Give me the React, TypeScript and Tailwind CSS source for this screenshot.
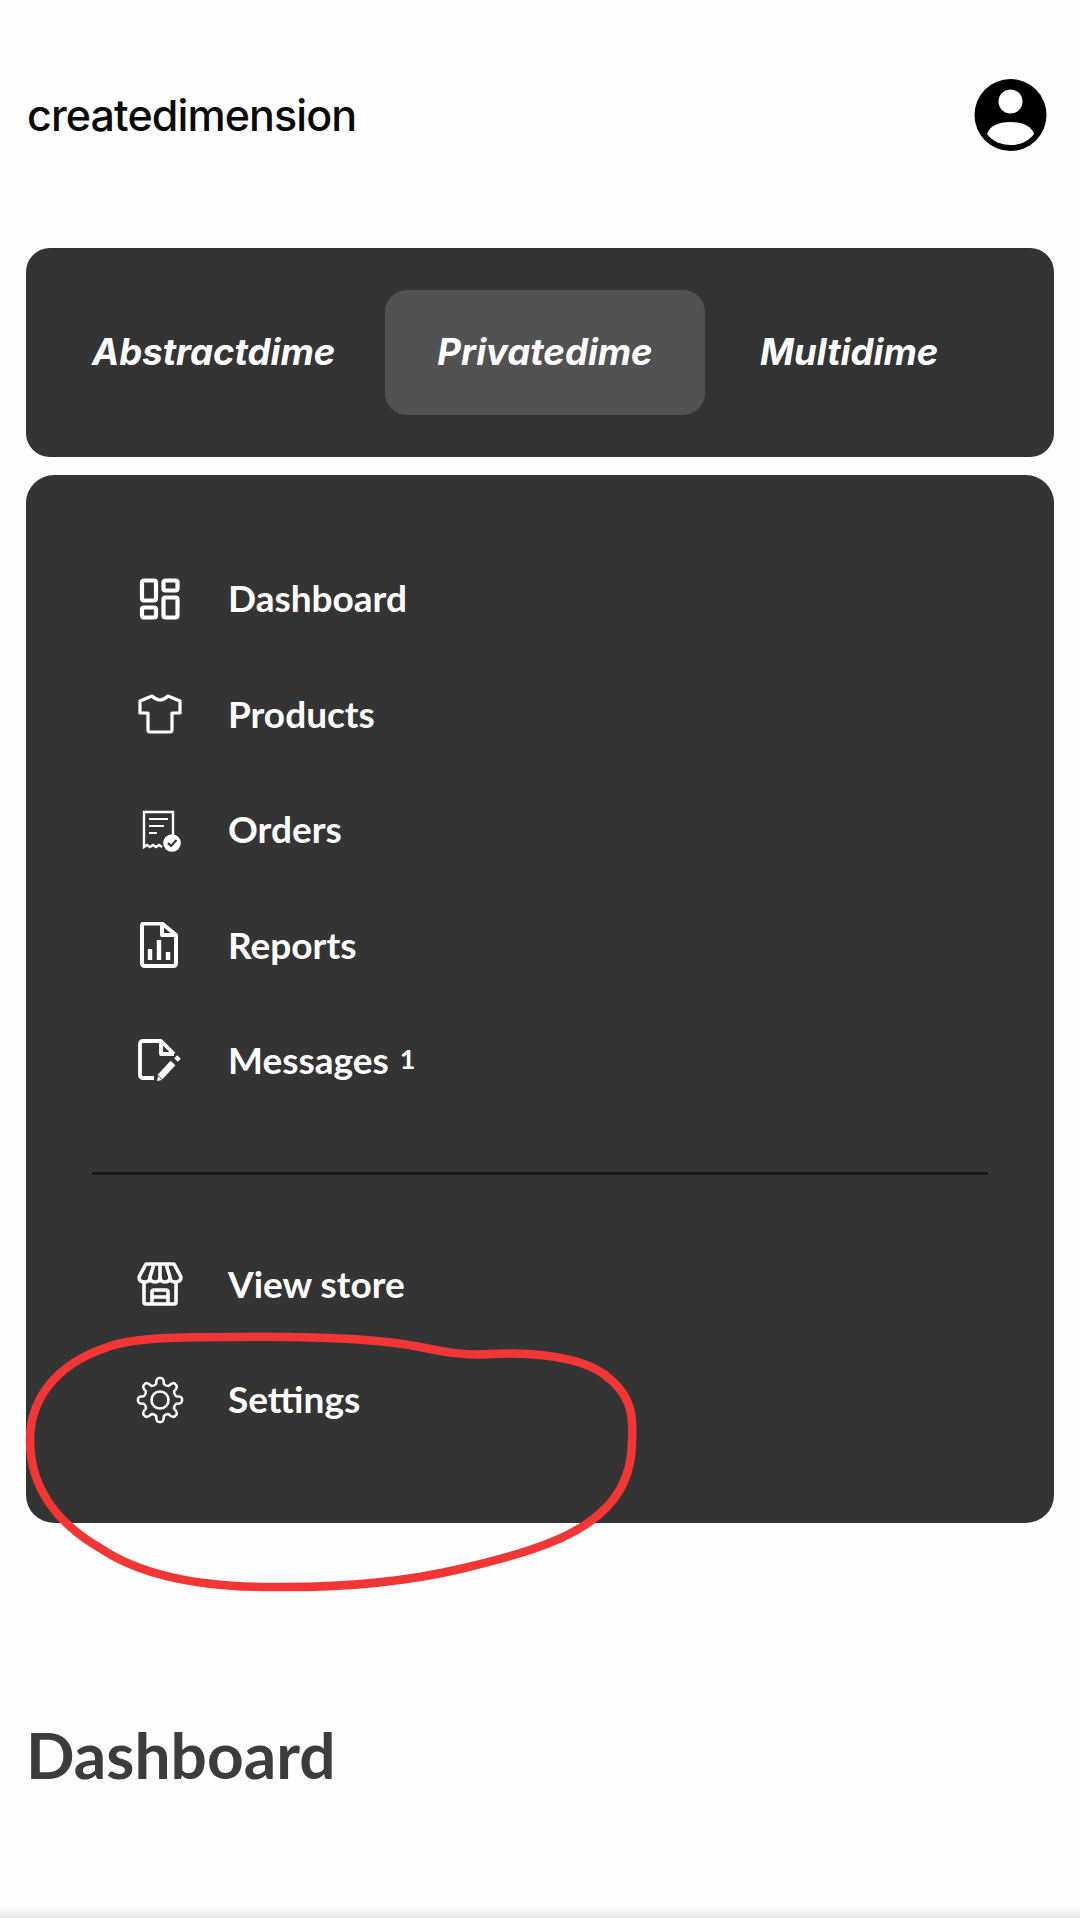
import React from 'react';

const AvatarIcon = () => (
  <svg width="73" height="74" viewBox="0 0 73 74">
    <circle cx="36.5" cy="37" r="36" fill="#000" />
    <circle cx="36.5" cy="23.5" r="12" fill="#fff" />
    <path d="M13 56 C16 47 26 44 36.5 44 C47 44 57 47 60 56 C55 63 46 67 36.5 67 C27 67 18 63 13 56 Z" fill="#fff" />
  </svg>
);

const DashboardIcon = () => (
  <svg width="44" height="44" viewBox="0 0 44 44" fill="none" stroke="#fff" strokeWidth="4.2">
    <rect x="4" y="3.5" width="14" height="20" rx="2" />
    <rect x="4" y="30.5" width="14" height="10" rx="2" />
    <rect x="25.5" y="3.5" width="14" height="10" rx="2" />
    <rect x="25.5" y="20.5" width="14" height="20" rx="2" />
  </svg>
);

const ShirtIcon = () => (
  <svg width="46" height="44" viewBox="0 0 46 44" fill="none" stroke="#fff" strokeWidth="3.2" strokeLinejoin="round">
    <path d="M15 4 Q23 12 31 4 L43 9 V21 H35 V38 Q35 40 33 40 H13 Q11 40 11 38 V21 H3 V9 Z" />
  </svg>
);

const ReceiptIcon = () => (
  <svg width="46" height="44" viewBox="0 0 46 44" fill="none" stroke="#fff" strokeWidth="2.4">
    <path d="M36 27 V4 H7 V39 L10 37 L13 39 L16 37 L19 39 L22 37 L25 39" />
    <path d="M12 11 H31 M12 18 H27 M12 25 H20" strokeWidth="2.2" />
    <circle cx="35" cy="35" r="8.8" fill="#fff" stroke="none" />
    <path d="M31 35 L34 38 L39.5 32" stroke="#343434" strokeWidth="2.2" />
  </svg>
);

const ReportIcon = () => (
  <svg width="46" height="46" viewBox="0 0 46 46" fill="none" stroke="#fff" strokeWidth="4" strokeLinejoin="round">
    <path d="M7 1.5 H25 V13 H39 V41 Q39 44 36 44 H8 Q5 44 5 41 V4 Q5 1.5 7 1.5 Z M25 1.5 L39 13" />
    <path d="M13 38 V27 M22 38 V18 M31 38 V30" strokeWidth="4.4" />
  </svg>
);

const MessageIcon = () => (
  <svg width="46" height="44" viewBox="0 0 46 44" fill="none" stroke="#fff" strokeWidth="3.8" strokeLinejoin="round">
    <path d="M17 39 H6 Q3 39 3 36 V5 Q3 2 6 2 H24 L37 15 M24 2 V15 H37" />
    <path d="M23 38 L36 24" strokeWidth="6.5" />
    <path d="M20 42 L21 37 L25 41 Z" fill="#fff" stroke="none" />
    <path d="M39 21 L42 18" strokeWidth="5" />
  </svg>
);

const StoreIcon = () => (
  <svg width="46" height="44" viewBox="0 0 46 44" fill="none" stroke="#fff" strokeWidth="3.6" strokeLinejoin="round">
    <path d="M9 2 H37 L44 15 Q44 20 38 20 Q33 20 33 15 Q33 20 28 20 Q23 20 23 15 Q23 20 18 20 Q13 20 13 15 Q13 20 8 20 Q2 20 2 15 Z" />
    <path d="M13 15 L17 2 M33 15 L29 2 M23 15 V2" />
    <path d="M7 20 V40 Q7 42 9 42 H37 Q39 42 39 40 V20" />
    <path d="M15 41 V30 Q15 28 17 28 H29 Q31 28 31 30 V41 M15 35 H31" />
  </svg>
);

// eight rounded teeth around a ring
const gearPath = () => {
  const teeth = 8;
  const outer = 22;
  const inner = 16.5;
  const pts: string[] = [];
  for (let i = 0; i < teeth; i++) {
    const a = (i / teeth) * Math.PI * 2 - Math.PI / 2;
    const step = (Math.PI * 2) / teeth;
    const p = (r: number, t: number) =>
      `${(24 + r * Math.cos(t)).toFixed(2)} ${(24 + r * Math.sin(t)).toFixed(2)}`;
    pts.push(`${i === 0 ? 'M' : 'L'} ${p(inner, a - step * 0.3)}`);
    pts.push(`Q ${p(outer + 1, a - step * 0.22)} ${p(outer, a)}`);
    pts.push(`Q ${p(outer + 1, a + step * 0.22)} ${p(inner, a + step * 0.3)}`);
    pts.push(`Q ${p(inner - 1.5, a + step * 0.5)} ${p(inner, a + step * 0.7)}`);
  }
  return pts.join(' ') + ' Z';
};

const GearIcon = () => (
  <svg width="48" height="48" viewBox="0 0 48 48" fill="none" stroke="#fff" strokeWidth="2.5" strokeLinejoin="round">
    <path d={gearPath()} />
    <circle cx="24" cy="24" r="8.5" />
  </svg>
);

const mainItems = [
  { icon: DashboardIcon, label: 'Dashboard' },
  { icon: ShirtIcon, label: 'Products' },
  { icon: ReceiptIcon, label: 'Orders' },
  { icon: ReportIcon, label: 'Reports' },
  { icon: MessageIcon, label: 'Messages', badge: '1' },
];

const storeItems = [
  { icon: StoreIcon, label: 'View store' },
  { icon: GearIcon, label: 'Settings' },
];

const MenuRow = ({ item }: { item: { icon: React.FC; label: string; badge?: string } }) => {
  const Icon = item.icon;
  return (
    <div className="flex h-[115.5px] items-center pl-[110px]">
      <div className="flex h-[48px] w-[48px] shrink-0 items-center justify-center">
        <Icon />
      </div>
      <span className="mb-[2px] ml-[44px] text-[37px] font-bold text-white">{item.label}</span>
      {item.badge && <span className="mb-[4px] ml-[11px] text-[27px] font-bold text-white">{item.badge}</span>}
    </div>
  );
};

export default function App() {
  return (
    <div className="relative h-[1918px] overflow-hidden bg-[#fefefe] font-['Lato','Noto_Sans',sans-serif]">
      {/* Top bar */}
      <header className="flex h-[248px] items-start justify-between pt-[78px] pr-[33px] pl-[27px]">
        <span className="mt-[9px] font-['Inter',sans-serif] text-[43px] leading-[56px] font-medium tracking-[-0.9px] text-[#0a0a0a]">
          createdimension
        </span>
        <AvatarIcon />
      </header>

      {/* Dime switcher */}
      <div className="mx-[26px] flex h-[209px] items-center rounded-[24px] bg-[#343434] pl-[66px] font-['Inter',sans-serif] text-[36.5px] font-bold text-white italic">
        <span className="w-[293px]">Abstractdime</span>
        <span className="flex h-[125px] w-[320px] items-center justify-center rounded-[22px] bg-[#525252]">Privatedime</span>
        <span className="ml-[55px]">Multidime</span>
      </div>

      {/* Menu */}
      <nav className="mx-[26px] mt-[18px] h-[1048px] rounded-[28px] bg-[#343434] pt-[66px]">
        {mainItems.map((item) => (
          <MenuRow key={item.label} item={item} />
        ))}
        <div className="mx-[66px] mt-[53px] mb-[52px] h-[3px] bg-[#1a1a1a]" />
        {storeItems.map((item) => (
          <MenuRow key={item.label} item={item} />
        ))}
      </nav>

      <h1 className="mt-[196px] pl-[26px] text-[64px] leading-[72px] font-bold text-[#3c3c3e]">Dashboard</h1>

      {/* Red hand-drawn circle on top of the screenshot */}
      <svg className="pointer-events-none absolute top-0 left-0" width="1080" height="1918" viewBox="0 0 1080 1918" fill="none">
        <path
          d="M30 1440 C30 1400 55 1365 105 1348 C130 1338 170 1337 230 1337 C300 1336 370 1337 420 1347 C445 1352 465 1356 490 1354 C530 1352 580 1356 605 1375 C628 1392 634 1410 632 1440 C632 1480 615 1505 585 1525 C555 1545 510 1557 460 1569 C400 1583 340 1588 270 1587 C200 1587 140 1575 100 1548 C60 1525 30 1490 30 1440 Z"
          stroke="#f23535"
          strokeWidth="8.5"
          strokeLinecap="round"
        />
      </svg>

      {/* Soft edge at the bottom of the page */}
      <div className="absolute right-0 bottom-0 left-0 h-[12px] bg-gradient-to-b from-[#fefefe] to-[#e9e9e9]" />
    </div>
  );
}
